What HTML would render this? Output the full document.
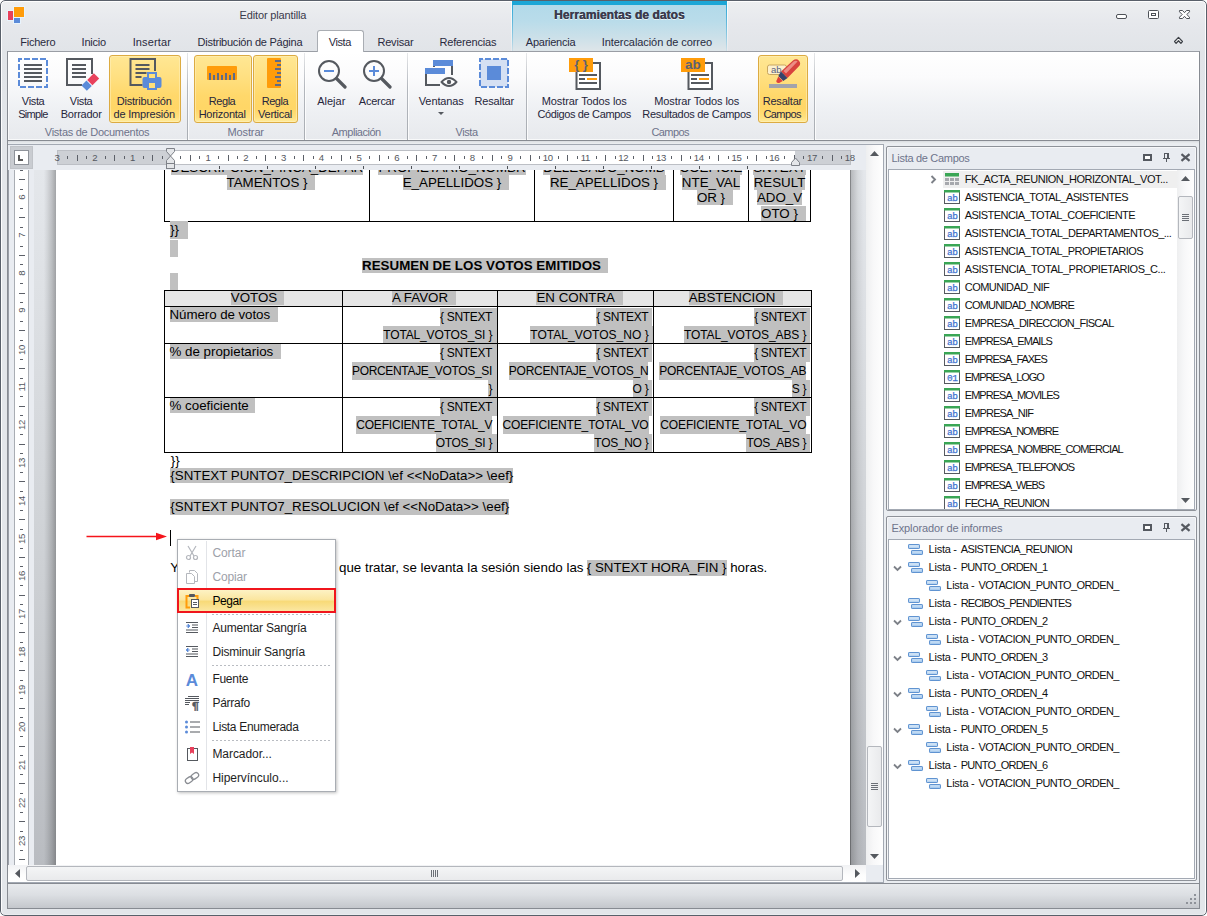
<!DOCTYPE html>
<html lang="es"><head><meta charset="utf-8"><title>Editor plantilla</title>
<style>
html,body{margin:0;padding:0;background:#fff}
body{width:1207px;height:916px;overflow:hidden;position:relative}
#win{position:absolute;left:0;top:0;width:1207px;height:916px;box-sizing:border-box;border-radius:5px;overflow:hidden;
 font-family:'Liberation Sans',sans-serif;font-size:11px;
 background:linear-gradient(to bottom,#edeff1 0,#e6e8ec 24px,#e1e4e8 52px,#e3e6ea 150px,#e3e6ea 100%)}
#win div,#win span,#win svg{position:absolute;display:block}
#win .t{white-space:pre}
#frame{left:0;top:0;width:1207px;height:916px;box-sizing:border-box;border:1px solid #59606a;border-radius:5px;pointer-events:none}
#glow{left:1px;top:1px;width:1205px;height:914px;box-sizing:border-box;border:1px solid rgba(255,255,255,.92);border-bottom-color:rgba(255,255,255,.25);border-radius:4px}

</style></head>
<body>
<div id="win">
<div id="glow"></div>
<div style="left:8px;top:11px;width:5px;height:9px;background:#e8415c;box-shadow:0 0 0 1px rgba(232,244,255,.85)"></div>
<div style="left:14px;top:7px;width:10px;height:10px;background:#ff9c0a;box-shadow:0 0 0 1px rgba(232,244,255,.85)"></div>
<div style="left:14px;top:18px;width:6px;height:5px;background:#5b8bd9;box-shadow:0 0 0 1px rgba(232,244,255,.85)"></div>
<span class="t" style="left:239.62px;top:8.49px;line-height:14px;height:14px;color:#3a3a4c;font-size:11px;letter-spacing:-0.156px;">Editor plantilla</span>
<div style="left:511px;top:1px;width:1px;height:50px;background:linear-gradient(to bottom,rgba(255,255,255,.9),rgba(255,255,255,.2))"></div>
<div style="left:727px;top:1px;width:1px;height:50px;background:linear-gradient(to bottom,rgba(255,255,255,.9),rgba(255,255,255,.2))"></div>
<div style="left:512px;top:1px;width:215px;height:50px;background:linear-gradient(to bottom,#b1d9e9 0,#b9dcea 20px,#cbe0e9 36px,#dde5e9 49px)"></div>
<div style="left:512px;top:1px;width:1px;height:50px;background:linear-gradient(to bottom,#22a5d7 0,#5fb7db 40%,rgba(170,210,228,.3) 100%)"></div>
<div style="left:726px;top:1px;width:1px;height:50px;background:linear-gradient(to bottom,#22a5d7 0,#5fb7db 40%,rgba(170,210,228,.3) 100%)"></div>
<div style="left:512px;top:1px;width:215px;height:4px;background:#1ca6d6"></div>
<span class="t" style="left:554.03px;top:7.94px;line-height:15px;height:15px;color:#3b3b4d;font-size:12px;font-weight:700;letter-spacing:0.058px;text-shadow:0.350px 0 0 #3b3b4d,0 1px 0 rgba(255,255,255,.7);">Herramientas de datos</span>
<svg style="left:1114px;top:8px" width="80" height="14" viewBox="0 0 80 14"><rect x="2.5" y="6.5" width="10" height="4" rx="1.5" fill="#fff" stroke="#4d5157"/><rect x="34.5" y="2.5" width="10" height="8" rx="1" fill="#fff" stroke="#4d5157"/><rect x="37.5" y="5.5" width="4" height="2" fill="#fff" stroke="#4d5157"/><path d="M65.500 2.500h3l2 2.200 2-2.200h3v1.300l-2.700 2.700 2.700 2.700v1.300h-3l-2-2.200-2 2.200h-3v-1.300l2.700-2.700-2.700-2.700z" fill="#fff" stroke="#4d5157"/></svg>
<svg style="left:1172px;top:35px" width="14" height="11" viewBox="0 0 14 11"><path d="M2.600 6.500L6.500 2.400L10.400 6.500L8.900 8.200L6.500 5.700L4.100 8.200z" fill="#fff" stroke="#3f4349" stroke-width="1.300" stroke-linejoin="round"/></svg>
<div style="left:7px;top:51px;width:1193px;height:858px;box-sizing:border-box;border:1px solid #878b92;background:#eaedf1"></div>
<div style="left:8px;top:141px;width:1191px;height:3px;background:linear-gradient(to bottom,#d9dce0,#e4e7ea 50%,#eceef1)"></div>
<div style="left:7px;top:51px;width:1193px;height:90px;box-sizing:border-box;border:1px solid #9a9ea5;border-bottom-color:#878b92;border-left-color:#878b92;border-right-color:#878b92;background:linear-gradient(to bottom,#ffffff 0,#fbfbfc 25px,#eff1f4 55px,#e7e9ed 88px);box-shadow:inset 0 0 0 1px rgba(255,255,255,.7)"></div>
<div style="left:317px;top:30px;width:47px;height:22px;box-sizing:border-box;border:1px solid #a9adb3;border-bottom:none;border-radius:3px 3px 0 0;background:#fff"></div>
<span class="t" style="left:20.30px;top:35.19px;line-height:14px;height:14px;color:#2a2a40;font-size:11px;letter-spacing:-0.241px;">Fichero</span>
<span class="t" style="left:81.60px;top:35.19px;line-height:14px;height:14px;color:#2a2a40;font-size:11px;letter-spacing:-0.215px;">Inicio</span>
<span class="t" style="left:132.70px;top:35.19px;line-height:14px;height:14px;color:#2a2a40;font-size:11px;letter-spacing:0.125px;">Insertar</span>
<span class="t" style="left:197.50px;top:35.19px;line-height:14px;height:14px;color:#2a2a40;font-size:11px;letter-spacing:-0.240px;">Distribución de Página</span>
<span class="t" style="left:328.70px;top:35.19px;line-height:14px;height:14px;color:#2a2a40;font-size:11px;letter-spacing:-0.393px;">Vista</span>
<span class="t" style="left:377.40px;top:35.19px;line-height:14px;height:14px;color:#2a2a40;font-size:11px;letter-spacing:-0.185px;">Revisar</span>
<span class="t" style="left:439.40px;top:35.19px;line-height:14px;height:14px;color:#2a2a40;font-size:11px;letter-spacing:-0.155px;">Referencias</span>
<span class="t" style="left:525.80px;top:35.19px;line-height:14px;height:14px;color:#2a2a40;font-size:11px;letter-spacing:-0.248px;">Apariencia</span>
<span class="t" style="left:601.80px;top:35.19px;line-height:14px;height:14px;color:#2a2a40;font-size:11px;letter-spacing:-0.074px;">Intercalación de correo</span>
<div style="left:187px;top:53px;width:1px;height:87px;background:linear-gradient(to bottom,rgba(176,180,186,.3),#b3b7bd 40%,#a9adb3)"></div>
<div style="left:188px;top:53px;width:1px;height:87px;background:rgba(255,255,255,.8)"></div>
<div style="left:304px;top:53px;width:1px;height:87px;background:linear-gradient(to bottom,rgba(176,180,186,.3),#b3b7bd 40%,#a9adb3)"></div>
<div style="left:305px;top:53px;width:1px;height:87px;background:rgba(255,255,255,.8)"></div>
<div style="left:407px;top:53px;width:1px;height:87px;background:linear-gradient(to bottom,rgba(176,180,186,.3),#b3b7bd 40%,#a9adb3)"></div>
<div style="left:408px;top:53px;width:1px;height:87px;background:rgba(255,255,255,.8)"></div>
<div style="left:526px;top:53px;width:1px;height:87px;background:linear-gradient(to bottom,rgba(176,180,186,.3),#b3b7bd 40%,#a9adb3)"></div>
<div style="left:527px;top:53px;width:1px;height:87px;background:rgba(255,255,255,.8)"></div>
<div style="left:814px;top:53px;width:1px;height:87px;background:linear-gradient(to bottom,rgba(176,180,186,.3),#b3b7bd 40%,#a9adb3)"></div>
<div style="left:815px;top:53px;width:1px;height:87px;background:rgba(255,255,255,.8)"></div>
<span class="t" style="left:44.82px;top:125.19px;line-height:14px;height:14px;color:#6e738b;font-size:11px;letter-spacing:-0.268px;">Vistas de Documentos</span>
<span class="t" style="left:227.58px;top:125.19px;line-height:14px;height:14px;color:#6e738b;font-size:11px;letter-spacing:-0.140px;">Mostrar</span>
<span class="t" style="left:331.76px;top:125.19px;line-height:14px;height:14px;color:#6e738b;font-size:11px;letter-spacing:-0.481px;">Ampliación</span>
<span class="t" style="left:455.45px;top:125.19px;line-height:14px;height:14px;color:#6e738b;font-size:11px;letter-spacing:-0.393px;">Vista</span>
<span class="t" style="left:651.50px;top:125.19px;line-height:14px;height:14px;color:#6e738b;font-size:11px;letter-spacing:-0.595px;">Campos</span>
<div style="left:109px;top:55px;width:72px;height:68px;box-sizing:border-box;border:1px solid #dcab42;border-radius:3px;background:linear-gradient(to bottom,#ffe794 0,#ffe082 30%,#ffd86b 60%,#ffd666 80%,#ffe07e 93%,#ffeb9c 100%);box-shadow:inset 0 0 0 1px rgba(255,240,190,.55)"></div>
<div style="left:194px;top:55px;width:58px;height:68px;box-sizing:border-box;border:1px solid #dcab42;border-radius:3px;background:linear-gradient(to bottom,#ffe794 0,#ffe082 30%,#ffd86b 60%,#ffd666 80%,#ffe07e 93%,#ffeb9c 100%);box-shadow:inset 0 0 0 1px rgba(255,240,190,.55)"></div>
<div style="left:253px;top:55px;width:45px;height:68px;box-sizing:border-box;border:1px solid #dcab42;border-radius:3px;background:linear-gradient(to bottom,#ffe794 0,#ffe082 30%,#ffd86b 60%,#ffd666 80%,#ffe07e 93%,#ffeb9c 100%);box-shadow:inset 0 0 0 1px rgba(255,240,190,.55)"></div>
<div style="left:758px;top:55px;width:50px;height:68px;box-sizing:border-box;border:1px solid #dcab42;border-radius:3px;background:linear-gradient(to bottom,#ffe794 0,#ffe082 30%,#ffd86b 60%,#ffd666 80%,#ffe07e 93%,#ffeb9c 100%);box-shadow:inset 0 0 0 1px rgba(255,240,190,.55)"></div>
<span class="t" style="left:21.87px;top:93.59px;line-height:14px;height:14px;color:#26263b;font-size:11px;letter-spacing:-0.353px;">Vista</span>
<span class="t" style="left:18.16px;top:106.79px;line-height:14px;height:14px;color:#26263b;font-size:11px;letter-spacing:-0.671px;">Simple</span>
<span class="t" style="left:69.87px;top:93.59px;line-height:14px;height:14px;color:#26263b;font-size:11px;letter-spacing:-0.353px;">Vista</span>
<span class="t" style="left:60.78px;top:106.79px;line-height:14px;height:14px;color:#26263b;font-size:11px;letter-spacing:-0.250px;">Borrador</span>
<span class="t" style="left:116.70px;top:93.59px;line-height:14px;height:14px;color:#26263b;font-size:11px;letter-spacing:-0.206px;">Distribución</span>
<span class="t" style="left:113.51px;top:106.79px;line-height:14px;height:14px;color:#26263b;font-size:11px;letter-spacing:-0.183px;">de Impresión</span>
<span class="t" style="left:208.87px;top:93.59px;line-height:14px;height:14px;color:#26263b;font-size:11px;letter-spacing:-0.470px;">Regla</span>
<span class="t" style="left:198.67px;top:106.79px;line-height:14px;height:14px;color:#26263b;font-size:11px;letter-spacing:-0.253px;">Horizontal</span>
<span class="t" style="left:261.76px;top:93.59px;line-height:14px;height:14px;color:#26263b;font-size:11px;letter-spacing:-0.470px;">Regla</span>
<span class="t" style="left:258.07px;top:106.79px;line-height:14px;height:14px;color:#26263b;font-size:11px;letter-spacing:-0.260px;">Vertical</span>
<span class="t" style="left:317.29px;top:93.59px;line-height:14px;height:14px;color:#26263b;font-size:11px;letter-spacing:-0.021px;">Alejar</span>
<span class="t" style="left:358.86px;top:93.59px;line-height:14px;height:14px;color:#26263b;font-size:11px;letter-spacing:-0.272px;">Acercar</span>
<span class="t" style="left:418.75px;top:93.59px;line-height:14px;height:14px;color:#26263b;font-size:11px;letter-spacing:-0.109px;">Ventanas</span>
<span class="t" style="left:474.60px;top:93.59px;line-height:14px;height:14px;color:#26263b;font-size:11px;letter-spacing:-0.196px;">Resaltar</span>
<span class="t" style="left:541.75px;top:93.59px;line-height:14px;height:14px;color:#26263b;font-size:11px;letter-spacing:-0.095px;">Mostrar Todos los</span>
<span class="t" style="left:537.42px;top:106.79px;line-height:14px;height:14px;color:#26263b;font-size:11px;letter-spacing:-0.369px;">Códigos de Campos</span>
<span class="t" style="left:654.25px;top:93.59px;line-height:14px;height:14px;color:#26263b;font-size:11px;letter-spacing:-0.095px;">Mostrar Todos los</span>
<span class="t" style="left:642.31px;top:106.79px;line-height:14px;height:14px;color:#26263b;font-size:11px;letter-spacing:-0.282px;">Resultados de Campos</span>
<span class="t" style="left:762.70px;top:93.59px;line-height:14px;height:14px;color:#26263b;font-size:11px;letter-spacing:-0.196px;">Resaltar</span>
<span class="t" style="left:763.42px;top:106.79px;line-height:14px;height:14px;color:#26263b;font-size:11px;letter-spacing:-0.561px;">Campos</span>
<svg style="left:438px;top:112px" width="6" height="3" viewBox="0 0 6 3"><path d="M0 0h6l-3 3z" fill="#55595f"/></svg>
<svg style="left:17px;top:57px" width="32" height="32" viewBox="0 0 32 32"><rect x="2" y="2" width="28" height="28" fill="none" stroke="#5b8bd9" stroke-width="2" stroke-dasharray="6 2" stroke-dashoffset="3"/><rect x="7" y="7" width="18" height="2" fill="#55595f"/><rect x="7" y="11" width="18" height="2" fill="#55595f"/><rect x="7" y="15" width="18" height="2" fill="#55595f"/><rect x="7" y="19" width="18" height="2" fill="#55595f"/><rect x="7" y="23" width="18" height="2" fill="#55595f"/></svg>
<svg style="left:65px;top:57px" width="36" height="36" viewBox="0 0 36 36"><path d="M27 17V2H2v26h15" fill="none" stroke="#55595f" stroke-width="2"/><rect x="7" y="7" width="14" height="2" fill="#55595f"/><rect x="7" y="11" width="14" height="2" fill="#55595f"/><rect x="7" y="15" width="14" height="2" fill="#55595f"/><rect x="7" y="19" width="14" height="2" fill="#55595f"/><g transform="rotate(-45 25 25)"><rect x="16.500" y="21.500" width="7" height="7.500" fill="#5b8bd9"/><rect x="24.500" y="21.500" width="9.500" height="7.500" fill="#e8415c"/></g></svg>
<svg style="left:128px;top:57px" width="34" height="34" viewBox="0 0 34 34"><path d="M27 14V2H2.500v26h12" fill="none" stroke="#55595f" stroke-width="2"/><rect x="7.500" y="7" width="14" height="2" fill="#55595f"/><rect x="7.500" y="11" width="14" height="2" fill="#55595f"/><rect x="7.500" y="15" width="11" height="2" fill="#55595f"/><rect x="7.500" y="19" width="6" height="2" fill="#55595f"/><path d="M19 15h10v5h2.500q2 0 2 2v7q0 2-2 2H29v2H19v-2h-2.500q-2 0-2-2v-7q0-2 2-2H19z" fill="#5b8bd9"/><rect x="21" y="17" width="6" height="4" fill="#ffe07a"/><rect x="21" y="26" width="6" height="5" fill="#ffe07a"/></svg>
<svg style="left:206px;top:57px" width="32" height="32" viewBox="0 0 32 32"><rect x="1" y="9" width="30" height="14" rx="1" fill="#ff9c0a"/><rect x="3" y="16" width="2" height="7" fill="#5d6b8a"/><rect x="7" y="18" width="2" height="5" fill="#5d6b8a"/><rect x="11" y="16" width="2" height="7" fill="#5d6b8a"/><rect x="15" y="18" width="2" height="5" fill="#5d6b8a"/><rect x="19" y="16" width="2" height="7" fill="#5d6b8a"/><rect x="23" y="18" width="2" height="5" fill="#5d6b8a"/><rect x="27" y="16" width="2" height="7" fill="#5d6b8a"/></svg>
<svg style="left:258px;top:57px" width="32" height="32" viewBox="0 0 32 32"><rect x="9" y="1" width="14" height="30" rx="1" fill="#ff9c0a"/><rect x="17" y="3" width="6" height="2" fill="#5d6b8a"/><rect x="19" y="7" width="4" height="2" fill="#5d6b8a"/><rect x="17" y="11" width="6" height="2" fill="#5d6b8a"/><rect x="19" y="15" width="4" height="2" fill="#5d6b8a"/><rect x="17" y="19" width="6" height="2" fill="#5d6b8a"/><rect x="19" y="23" width="4" height="2" fill="#5d6b8a"/><rect x="17" y="27" width="6" height="2" fill="#5d6b8a"/></svg>
<svg style="left:316px;top:57px" width="32" height="32" viewBox="0 0 32 32"><circle cx="13" cy="14" r="10" fill="none" stroke="#55595f" stroke-width="2"/><path d="M20.500 21.500L29 30" stroke="#55595f" stroke-width="3.200" stroke-linecap="round"/><rect x="8" y="13" width="10" height="2" fill="#5b8bd9"/></svg>
<svg style="left:361px;top:57px" width="32" height="32" viewBox="0 0 32 32"><circle cx="13" cy="14" r="10" fill="none" stroke="#55595f" stroke-width="2"/><path d="M20.500 21.500L29 30" stroke="#55595f" stroke-width="3.200" stroke-linecap="round"/><rect x="8" y="13" width="10" height="2" fill="#5b8bd9"/><rect x="12" y="9" width="2" height="10" fill="#5b8bd9"/></svg>
<svg style="left:424px;top:57px" width="34" height="32" viewBox="0 0 34 32"><path d="M10 10V4h18v14" fill="none" stroke="#55595f" stroke-width="2"/><rect x="9" y="3" width="20" height="6" fill="#5b8bd9"/><path d="M2 12v16h14" fill="none" stroke="#55595f" stroke-width="2"/><path d="M20 12v5" stroke="#55595f" stroke-width="2"/><rect x="1" y="11" width="20" height="6" fill="#5b8bd9"/><path d="M17.500 25q7.500-8 15 0q-7.500 8-15 0z" fill="#fff" stroke="#55595f" stroke-width="2" stroke-linejoin="round"/><circle cx="25" cy="25" r="2.200" fill="#55595f"/></svg>
<svg style="left:478px;top:57px" width="32" height="32" viewBox="0 0 32 32"><rect x="2" y="2" width="28" height="28" fill="#d5e0f3" stroke="#5b8bd9" stroke-width="2" stroke-dasharray="6 2" stroke-dashoffset="3"/><rect x="9" y="9" width="14" height="14" fill="#5b8bd9"/></svg>
<svg style="left:569px;top:57px" width="34" height="34" viewBox="0 0 34 34"><rect x="7.500" y="6" width="23.500" height="26" fill="#fff" stroke="#55595f" stroke-width="2"/><rect x="10" y="17" width="18" height="2" fill="#55595f"/><rect x="10" y="21" width="6" height="2" fill="#55595f"/><rect x="18" y="21" width="10" height="2" fill="#ff9c0a"/><rect x="10" y="25" width="18" height="2" fill="#55595f"/><rect x="0" y="1" width="24" height="14" fill="#ff9c0a"/><text x="12" y="12.300" text-anchor="middle" font-family="Liberation Sans,sans-serif" font-weight="700" font-size="13" fill="#5d6273">{ }</text></svg>
<svg style="left:681px;top:57px" width="34" height="34" viewBox="0 0 34 34"><rect x="7.500" y="6" width="23.500" height="26" fill="#fff" stroke="#55595f" stroke-width="2"/><rect x="10" y="17" width="18" height="2" fill="#55595f"/><rect x="10" y="21" width="6" height="2" fill="#55595f"/><rect x="18" y="21" width="10" height="2" fill="#ff9c0a"/><rect x="10" y="25" width="18" height="2" fill="#55595f"/><rect x="0" y="1" width="24" height="14" fill="#ff9c0a"/><text x="12" y="12.300" text-anchor="middle" font-family="Liberation Sans,sans-serif" font-weight="700" font-size="13.5" fill="#5d6273">ab</text></svg>
<svg style="left:766px;top:57px" width="36" height="32" viewBox="0 0 36 32"><rect x="1.500" y="8" width="19" height="9.500" rx="2" fill="#fdf1cc" stroke="#c8a660"/><text x="5" y="16" font-family="Liberation Sans,sans-serif" font-size="9.500" fill="#5a6180">ab</text><path d="M27 3.500q3.300-2.600 6 .2q2.500 3-.3 5.800L21.500 21l-6.500-6.500z" fill="#d8433e"/><path d="M27.600 4.600q2.200-1.500 4 0L20 16.500l-2.500-2.500z" fill="#f09a92" opacity=".85"/><path d="M15 14.500l6.500 6.500-4.200 3-5-5z" fill="#35426b"/><path d="M12.300 19.500l4.500 4.500-3.600 1.900q-1.600.6-2.600-.6q-.8-1.300.3-2.600z" fill="#e0413c"/><rect x="3" y="27" width="28" height="4" fill="#a2a3ab"/></svg>
<div style="left:8px;top:144px;width:876px;height:739px;box-sizing:border-box;border:1px solid #a3a9b3;border-left-color:#9a9fa8;background:#e9ecf1"></div>
<div style="left:34px;top:170px;width:22px;height:695px;background:linear-gradient(to right,rgba(0,0,0,0) 0,rgba(0,0,0,0) 45%,rgba(0,0,0,.07) 62%,rgba(0,0,0,.17) 82%,rgba(0,0,0,.29) 100%),linear-gradient(to bottom,#e4e7eb 0,#dcdfe3 22%,#cccfd3 60%,#b9bcc1 100%)"></div>
<div style="left:850px;top:170px;width:16px;height:695px;background:linear-gradient(to right,rgba(0,0,0,.42) 0,rgba(0,0,0,.42) 1px,rgba(0,0,0,.2) 1px,rgba(0,0,0,.06) 8px,rgba(0,0,0,0) 14px),linear-gradient(to bottom,#e4e7eb 0,#dcdfe3 22%,#cccfd3 60%,#b9bcc1 100%)"></div>
<div style="left:56px;top:170px;width:794px;height:695px;background:#fff"></div>
<span class="t" style="left:170.84px;top:160.00px;line-height:15px;height:15px;color:#000;font-size:13.333px;background:#c0c0c0;">DESCRIPCION_FINCA_DEPAR</span>
<span class="t" style="left:226.51px;top:175.00px;line-height:15px;height:15px;color:#000;font-size:13.333px;background:#c0c0c0;padding-right:8px;">TAMENTOS }</span>
<span class="t" style="left:378.44px;top:160.00px;line-height:15px;height:15px;color:#000;font-size:13.333px;background:#c0c0c0;">PROPIETARIO_NOMBR</span>
<span class="t" style="left:402.73px;top:175.00px;line-height:15px;height:15px;color:#000;font-size:13.333px;background:#c0c0c0;padding-right:8px;">E_APELLIDOS }</span>
<span class="t" style="left:543.27px;top:160.00px;line-height:15px;height:15px;color:#000;font-size:13.333px;background:#c0c0c0;">DELEGADO_NOMB</span>
<span class="t" style="left:549.91px;top:175.00px;line-height:15px;height:15px;color:#000;font-size:13.333px;background:#c0c0c0;padding-right:8px;">RE_APELLIDOS }</span>
<span class="t" style="left:679.52px;top:160.00px;line-height:15px;height:15px;color:#000;font-size:13.333px;background:#c0c0c0;">COEFICIE</span>
<span class="t" style="left:681.86px;top:175.00px;line-height:15px;height:15px;color:#000;font-size:13.333px;background:#c0c0c0;">NTE_VAL</span>
<span class="t" style="left:696.92px;top:190.00px;line-height:15px;height:15px;color:#000;font-size:13.333px;background:#c0c0c0;padding-right:8px;">OR }</span>
<span class="t" style="left:753.21px;top:160.00px;line-height:15px;height:15px;color:#000;font-size:13.333px;background:#c0c0c0;">SNTEXT</span>
<span class="t" style="left:753.70px;top:175.00px;line-height:15px;height:15px;color:#000;font-size:13.333px;background:#c0c0c0;">RESULT</span>
<span class="t" style="left:756.91px;top:190.00px;line-height:15px;height:15px;color:#000;font-size:13.333px;background:#c0c0c0;">ADO_V</span>
<span class="t" style="left:761.10px;top:205.50px;line-height:15px;height:15px;color:#000;font-size:13.333px;background:#c0c0c0;padding-right:8px;">OTO }</span>
<div style="left:164px;top:168px;width:1px;height:54px;background:#000"></div>
<div style="left:369px;top:168px;width:1px;height:54px;background:#000"></div>
<div style="left:534px;top:168px;width:1px;height:54px;background:#000"></div>
<div style="left:673px;top:168px;width:1px;height:54px;background:#000"></div>
<div style="left:748px;top:168px;width:1px;height:54px;background:#000"></div>
<div style="left:810px;top:168px;width:1px;height:54px;background:#000"></div>
<div style="left:164px;top:221px;width:647px;height:1px;background:#000"></div>
<span class="t" style="left:170.00px;top:221.33px;line-height:17.5px;height:17.5px;color:#000;font-size:13.333px;background:#c0c0c0;padding-right:9px;">}}</span>
<div style="left:170px;top:239.7px;width:8px;height:17.8px;background:#c0c0c0"></div>
<span class="t" style="left:362.00px;top:258.18px;line-height:15px;height:15px;color:#000;font-size:13.333px;font-weight:700;letter-spacing:0.027px;background:#c0c0c0;padding-right:7px;">RESUMEN DE LOS VOTOS EMITIDOS</span>
<div style="left:170px;top:273px;width:8px;height:17.5px;background:#c0c0c0"></div>
<div style="left:165px;top:291px;width:646px;height:15px;background:#e6e6e6"></div>
<span class="t" style="left:230.79px;top:291.28px;line-height:14px;height:14px;color:#000;font-size:13.333px;background:#c0c0c0;padding-right:7px;">VOTOS</span>
<span class="t" style="left:391.98px;top:291.28px;line-height:14px;height:14px;color:#000;font-size:13.333px;background:#c0c0c0;padding-right:8px;">A FAVOR</span>
<span class="t" style="left:536.45px;top:291.28px;line-height:14px;height:14px;color:#000;font-size:13.333px;background:#c0c0c0;padding-right:8px;">EN CONTRA</span>
<span class="t" style="left:688.67px;top:291.28px;line-height:14px;height:14px;color:#000;font-size:13.333px;background:#c0c0c0;padding-right:8px;">ABSTENCION</span>
<span class="t" style="left:169.50px;top:306.88px;line-height:15px;height:15px;color:#000;font-size:13.333px;letter-spacing:-0.067px;background:#c0c0c0;padding-right:7.5px;">Número de votos</span>
<span class="t" style="left:169.50px;top:344.18px;line-height:15px;height:15px;color:#000;font-size:13.333px;background:#c0c0c0;padding-right:7.5px;">% de propietarios</span>
<span class="t" style="left:169.50px;top:398.48px;line-height:15px;height:15px;color:#000;font-size:13.333px;background:#c0c0c0;padding-right:6.5px;">% coeficiente</span>
<span class="t" style="left:440.06px;top:307.84px;line-height:18px;height:18px;color:#000;font-size:12.0px;letter-spacing:-0.336px;background:#c0c0c0;padding-right:5px;">{ SNTEXT</span>
<span class="t" style="left:383.25px;top:326.04px;line-height:18px;height:18px;color:#000;font-size:12.0px;letter-spacing:-0.149px;background:#c0c0c0;padding-right:5px;">TOTAL_VOTOS_SI }</span>
<span class="t" style="left:440.06px;top:344.34px;line-height:18px;height:18px;color:#000;font-size:12.0px;letter-spacing:-0.336px;background:#c0c0c0;padding-right:5px;">{ SNTEXT</span>
<span class="t" style="left:351.98px;top:362.14px;line-height:18px;height:18px;color:#000;font-size:12.0px;letter-spacing:-0.325px;background:#c0c0c0;padding-right:5px;">PORCENTAJE_VOTOS_SI</span>
<span class="t" style="left:488.38px;top:379.84px;line-height:18px;height:18px;color:#000;font-size:12.0px;letter-spacing:-0.300px;background:#c0c0c0;padding-right:5px;">}</span>
<span class="t" style="left:440.06px;top:398.34px;line-height:18px;height:18px;color:#000;font-size:12.0px;letter-spacing:-0.336px;background:#c0c0c0;padding-right:5px;">{ SNTEXT</span>
<span class="t" style="left:356.21px;top:416.34px;line-height:18px;height:18px;color:#000;font-size:12.0px;letter-spacing:-0.189px;background:#c0c0c0;">COEFICIENTE_TOTAL_V</span>
<span class="t" style="left:435.66px;top:434.34px;line-height:18px;height:18px;color:#000;font-size:12.0px;letter-spacing:-0.300px;background:#c0c0c0;padding-right:5px;">OTOS_SI }</span>
<span class="t" style="left:596.36px;top:307.84px;line-height:18px;height:18px;color:#000;font-size:12.0px;letter-spacing:-0.336px;background:#c0c0c0;padding-right:4px;">{ SNTEXT</span>
<span class="t" style="left:530.32px;top:326.04px;line-height:18px;height:18px;color:#000;font-size:12.0px;letter-spacing:0.022px;background:#c0c0c0;padding-right:4px;">TOTAL_VOTOS_NO }</span>
<span class="t" style="left:596.36px;top:344.34px;line-height:18px;height:18px;color:#000;font-size:12.0px;letter-spacing:-0.336px;background:#c0c0c0;padding-right:4px;">{ SNTEXT</span>
<span class="t" style="left:508.78px;top:362.14px;line-height:18px;height:18px;color:#000;font-size:12.0px;letter-spacing:-0.216px;background:#c0c0c0;">PORCENTAJE_VOTOS_N</span>
<span class="t" style="left:632.61px;top:379.84px;line-height:18px;height:18px;color:#000;font-size:12.0px;letter-spacing:-0.300px;background:#c0c0c0;padding-right:4px;">O }</span>
<span class="t" style="left:596.36px;top:398.34px;line-height:18px;height:18px;color:#000;font-size:12.0px;letter-spacing:-0.336px;background:#c0c0c0;padding-right:4px;">{ SNTEXT</span>
<span class="t" style="left:502.55px;top:416.34px;line-height:18px;height:18px;color:#000;font-size:12.0px;letter-spacing:-0.146px;background:#c0c0c0;">COEFICIENTE_TOTAL_VO</span>
<span class="t" style="left:594.33px;top:434.34px;line-height:18px;height:18px;color:#000;font-size:12.0px;letter-spacing:-0.300px;background:#c0c0c0;padding-right:4px;">TOS_NO }</span>
<span class="t" style="left:754.16px;top:307.84px;line-height:18px;height:18px;color:#000;font-size:12.0px;letter-spacing:-0.336px;background:#c0c0c0;padding-right:4px;">{ SNTEXT</span>
<span class="t" style="left:683.91px;top:326.04px;line-height:18px;height:18px;color:#000;font-size:12.0px;letter-spacing:-0.092px;background:#c0c0c0;padding-right:4px;">TOTAL_VOTOS_ABS }</span>
<span class="t" style="left:754.16px;top:344.34px;line-height:18px;height:18px;color:#000;font-size:12.0px;letter-spacing:-0.336px;background:#c0c0c0;padding-right:4px;">{ SNTEXT</span>
<span class="t" style="left:659.20px;top:362.14px;line-height:18px;height:18px;color:#000;font-size:12.0px;letter-spacing:-0.202px;background:#c0c0c0;">PORCENTAJE_VOTOS_AB</span>
<span class="t" style="left:791.74px;top:379.84px;line-height:18px;height:18px;color:#000;font-size:12.0px;letter-spacing:-0.300px;background:#c0c0c0;padding-right:4px;">S }</span>
<span class="t" style="left:754.16px;top:398.34px;line-height:18px;height:18px;color:#000;font-size:12.0px;letter-spacing:-0.336px;background:#c0c0c0;padding-right:4px;">{ SNTEXT</span>
<span class="t" style="left:660.35px;top:416.34px;line-height:18px;height:18px;color:#000;font-size:12.0px;letter-spacing:-0.146px;background:#c0c0c0;">COEFICIENTE_TOTAL_VO</span>
<span class="t" style="left:746.42px;top:434.34px;line-height:18px;height:18px;color:#000;font-size:12.0px;letter-spacing:-0.300px;background:#c0c0c0;padding-right:4px;">TOS_ABS }</span>
<div style="left:164px;top:290px;width:1px;height:163px;background:#000"></div>
<div style="left:342px;top:290px;width:1px;height:163px;background:#000"></div>
<div style="left:497px;top:290px;width:1px;height:163px;background:#000"></div>
<div style="left:653px;top:290px;width:1px;height:163px;background:#000"></div>
<div style="left:811px;top:290px;width:1px;height:163px;background:#000"></div>
<div style="left:164px;top:290px;width:648px;height:1px;background:#000"></div>
<div style="left:164px;top:306px;width:648px;height:1px;background:#000"></div>
<div style="left:164px;top:343px;width:648px;height:1px;background:#000"></div>
<div style="left:164px;top:397px;width:648px;height:1px;background:#000"></div>
<div style="left:164px;top:452px;width:648px;height:1px;background:#000"></div>
<span class="t" style="left:170.80px;top:452.88px;line-height:15px;height:15px;color:#000;font-size:13.333px;">}}</span>
<span class="t" style="left:170.30px;top:467.93px;line-height:15.5px;height:15.5px;color:#000;font-size:13.333px;letter-spacing:-0.005px;background:#c0c0c0;">{SNTEXT PUNTO7_DESCRIPCION \ef &lt;&lt;NoData&gt;&gt; \eef}</span>
<span class="t" style="left:170.30px;top:499.03px;line-height:15.5px;height:15.5px;color:#000;font-size:13.333px;letter-spacing:0.004px;background:#c0c0c0;">{SNTEXT PUNTO7_RESOLUCION \ef &lt;&lt;NoData&gt;&gt; \eef}</span>
<div style="left:170px;top:530px;width:1px;height:16px;background:#000"></div>
<svg style="left:86px;top:531px" width="82" height="11" viewBox="0 0 82 11"><path d="M0.500 5.500H72" stroke="#f5141b" stroke-width="1.400"/><path d="M70 1.800L81 5.500L70 9.200z" fill="#f5141b"/></svg>
<span class="t" style="left:170.30px;top:560.18px;line-height:15px;height:15px;color:#000;font-size:13.333px;">Y no habiendo más asuntos que tratar, se levanta la sesión siendo las </span>
<span class="t" style="left:586.80px;top:559.68px;line-height:16px;height:16px;color:#000;font-size:13.333px;background:#c0c0c0;">{ SNTEXT HORA_FIN }</span>
<span class="t" style="left:726.50px;top:560.18px;line-height:15px;height:15px;color:#000;font-size:13.333px;"> horas.</span>
<div style="left:8px;top:145px;width:875px;height:25px;background:#e9ecf1"></div>
<div style="left:10px;top:146px;width:23px;height:23px;box-sizing:border-box;background:#c9ccd1;border:1px solid #c0c3c8"></div>
<div style="left:14px;top:150px;width:15px;height:15px;box-sizing:border-box;background:#fff;border:1px solid #8e9299"></div>
<div style="left:18px;top:155px;width:2px;height:6px;background:#5a5a5a"></div>
<div style="left:18px;top:159px;width:5px;height:2px;background:#5a5a5a"></div>
<div style="left:57px;top:150px;width:794px;height:15px;box-sizing:border-box;background:#fff;border:1px solid #bcbfc5"></div>
<div style="left:57px;top:150px;width:113px;height:15px;box-sizing:border-box;background:#cdd0d5;border:1px solid #bcbfc5;border-right:none"></div>
<div style="left:795px;top:150px;width:56px;height:15px;box-sizing:border-box;background:#cdd0d5;border:1px solid #bcbfc5;border-left:none"></div>
<span class="t" style="left:54.48px;top:151.67px;line-height:12px;height:12px;color:#545860;font-size:9.6px;">3</span>
<span class="t" style="left:92.23px;top:151.67px;line-height:12px;height:12px;color:#545860;font-size:9.6px;">2</span>
<span class="t" style="left:129.98px;top:151.67px;line-height:12px;height:12px;color:#545860;font-size:9.6px;">1</span>
<span class="t" style="left:205.48px;top:151.67px;line-height:12px;height:12px;color:#545860;font-size:9.6px;">1</span>
<span class="t" style="left:243.23px;top:151.67px;line-height:12px;height:12px;color:#545860;font-size:9.6px;">2</span>
<span class="t" style="left:280.98px;top:151.67px;line-height:12px;height:12px;color:#545860;font-size:9.6px;">3</span>
<span class="t" style="left:318.73px;top:151.67px;line-height:12px;height:12px;color:#545860;font-size:9.6px;">4</span>
<span class="t" style="left:356.48px;top:151.67px;line-height:12px;height:12px;color:#545860;font-size:9.6px;">5</span>
<span class="t" style="left:394.23px;top:151.67px;line-height:12px;height:12px;color:#545860;font-size:9.6px;">6</span>
<span class="t" style="left:431.98px;top:151.67px;line-height:12px;height:12px;color:#545860;font-size:9.6px;">7</span>
<span class="t" style="left:469.73px;top:151.67px;line-height:12px;height:12px;color:#545860;font-size:9.6px;">8</span>
<span class="t" style="left:507.48px;top:151.67px;line-height:12px;height:12px;color:#545860;font-size:9.6px;">9</span>
<span class="t" style="left:542.76px;top:151.67px;line-height:12px;height:12px;color:#545860;font-size:9.6px;letter-spacing:-0.400px;">10</span>
<span class="t" style="left:580.87px;top:151.67px;line-height:12px;height:12px;color:#545860;font-size:9.6px;letter-spacing:-0.400px;">11</span>
<span class="t" style="left:618.26px;top:151.67px;line-height:12px;height:12px;color:#545860;font-size:9.6px;letter-spacing:-0.400px;">12</span>
<span class="t" style="left:656.01px;top:151.67px;line-height:12px;height:12px;color:#545860;font-size:9.6px;letter-spacing:-0.400px;">13</span>
<span class="t" style="left:693.76px;top:151.67px;line-height:12px;height:12px;color:#545860;font-size:9.6px;letter-spacing:-0.400px;">14</span>
<span class="t" style="left:731.51px;top:151.67px;line-height:12px;height:12px;color:#545860;font-size:9.6px;letter-spacing:-0.400px;">15</span>
<span class="t" style="left:769.26px;top:151.67px;line-height:12px;height:12px;color:#545860;font-size:9.6px;letter-spacing:-0.400px;">16</span>
<span class="t" style="left:807.01px;top:151.67px;line-height:12px;height:12px;color:#545860;font-size:9.6px;letter-spacing:-0.400px;">17</span>
<span class="t" style="left:844.76px;top:151.67px;line-height:12px;height:12px;color:#545860;font-size:9.6px;letter-spacing:-0.400px;">18</span>
<svg style="left:57px;top:150px" width="794" height="19" viewBox="0 0 794 19"><rect x="10" y="6" width="1" height="3" fill="#5c6068"/><rect x="20" y="5" width="1" height="6" fill="#5c6068"/><rect x="29" y="6" width="1" height="3" fill="#5c6068"/><rect x="48" y="6" width="1" height="3" fill="#5c6068"/><rect x="57" y="5" width="1" height="6" fill="#5c6068"/><rect x="67" y="6" width="1" height="3" fill="#5c6068"/><rect x="86" y="6" width="1" height="3" fill="#5c6068"/><rect x="95" y="5" width="1" height="6" fill="#5c6068"/><rect x="105" y="6" width="1" height="3" fill="#5c6068"/><rect x="123" y="6" width="1" height="3" fill="#5c6068"/><rect x="133" y="5" width="1" height="6" fill="#5c6068"/><rect x="142" y="6" width="1" height="3" fill="#5c6068"/><rect x="161" y="6" width="1" height="3" fill="#5c6068"/><rect x="171" y="5" width="1" height="6" fill="#5c6068"/><rect x="180" y="6" width="1" height="3" fill="#5c6068"/><rect x="199" y="6" width="1" height="3" fill="#5c6068"/><rect x="208" y="5" width="1" height="6" fill="#5c6068"/><rect x="218" y="6" width="1" height="3" fill="#5c6068"/><rect x="237" y="6" width="1" height="3" fill="#5c6068"/><rect x="246" y="5" width="1" height="6" fill="#5c6068"/><rect x="256" y="6" width="1" height="3" fill="#5c6068"/><rect x="274" y="6" width="1" height="3" fill="#5c6068"/><rect x="284" y="5" width="1" height="6" fill="#5c6068"/><rect x="293" y="6" width="1" height="3" fill="#5c6068"/><rect x="312" y="6" width="1" height="3" fill="#5c6068"/><rect x="322" y="5" width="1" height="6" fill="#5c6068"/><rect x="331" y="6" width="1" height="3" fill="#5c6068"/><rect x="350" y="6" width="1" height="3" fill="#5c6068"/><rect x="359" y="5" width="1" height="6" fill="#5c6068"/><rect x="369" y="6" width="1" height="3" fill="#5c6068"/><rect x="388" y="6" width="1" height="3" fill="#5c6068"/><rect x="397" y="5" width="1" height="6" fill="#5c6068"/><rect x="407" y="6" width="1" height="3" fill="#5c6068"/><rect x="425" y="6" width="1" height="3" fill="#5c6068"/><rect x="435" y="5" width="1" height="6" fill="#5c6068"/><rect x="444" y="6" width="1" height="3" fill="#5c6068"/><rect x="463" y="6" width="1" height="3" fill="#5c6068"/><rect x="473" y="5" width="1" height="6" fill="#5c6068"/><rect x="482" y="6" width="1" height="3" fill="#5c6068"/><rect x="501" y="6" width="1" height="3" fill="#5c6068"/><rect x="510" y="5" width="1" height="6" fill="#5c6068"/><rect x="520" y="6" width="1" height="3" fill="#5c6068"/><rect x="539" y="6" width="1" height="3" fill="#5c6068"/><rect x="548" y="5" width="1" height="6" fill="#5c6068"/><rect x="558" y="6" width="1" height="3" fill="#5c6068"/><rect x="576" y="6" width="1" height="3" fill="#5c6068"/><rect x="586" y="5" width="1" height="6" fill="#5c6068"/><rect x="595" y="6" width="1" height="3" fill="#5c6068"/><rect x="614" y="6" width="1" height="3" fill="#5c6068"/><rect x="624" y="5" width="1" height="6" fill="#5c6068"/><rect x="633" y="6" width="1" height="3" fill="#5c6068"/><rect x="652" y="6" width="1" height="3" fill="#5c6068"/><rect x="661" y="5" width="1" height="6" fill="#5c6068"/><rect x="671" y="6" width="1" height="3" fill="#5c6068"/><rect x="690" y="6" width="1" height="3" fill="#5c6068"/><rect x="699" y="5" width="1" height="6" fill="#5c6068"/><rect x="709" y="6" width="1" height="3" fill="#5c6068"/><rect x="727" y="6" width="1" height="3" fill="#5c6068"/><rect x="737" y="5" width="1" height="6" fill="#5c6068"/><rect x="746" y="6" width="1" height="3" fill="#5c6068"/><rect x="765" y="6" width="1" height="3" fill="#5c6068"/><rect x="775" y="5" width="1" height="6" fill="#5c6068"/><rect x="784" y="6" width="1" height="3" fill="#5c6068"/><rect x="162" y="16" width="1" height="3" fill="#4d5157"/><rect x="210" y="16" width="1" height="3" fill="#4d5157"/><rect x="258" y="16" width="1" height="3" fill="#4d5157"/><rect x="306" y="16" width="1" height="3" fill="#4d5157"/><rect x="354" y="16" width="1" height="3" fill="#4d5157"/><rect x="402" y="16" width="1" height="3" fill="#4d5157"/><rect x="450" y="16" width="1" height="3" fill="#4d5157"/><rect x="498" y="16" width="1" height="3" fill="#4d5157"/><rect x="546" y="16" width="1" height="3" fill="#4d5157"/><rect x="594" y="16" width="1" height="3" fill="#4d5157"/><rect x="642" y="16" width="1" height="3" fill="#4d5157"/><rect x="690" y="16" width="1" height="3" fill="#4d5157"/></svg>
<svg style="left:165px;top:147px" width="12" height="24" viewBox="0 0 12 24"><path d="M1.500 1.500h8v3L5.500 9 1.500 4.500z" fill="#e4e6e9" stroke="#7d8188"/><path d="M1.500 16.500v-3L5.500 9l4 4.500v3z" fill="#e4e6e9" stroke="#7d8188"/><rect x="1.500" y="16.500" width="8" height="5" fill="#e4e6e9" stroke="#7d8188"/></svg>
<svg style="left:790px;top:155px" width="12" height="12" viewBox="0 0 12 12"><path d="M1.500 10.500v-3L5.500 3l4 4.500v3z" fill="#e4e6e9" stroke="#7d8188"/></svg>
<div style="left:14px;top:170px;width:15px;height:695px;box-sizing:border-box;background:#fff;border-left:1px solid #a9adb3;border-right:1px solid #a9adb3"></div>
<span class="t" style="left:11.500px;top:191.0px;width:20px;height:12px;line-height:12px;text-align:center;font-size:9.600px;color:#545860;transform:rotate(-90deg)">6</span>
<span class="t" style="left:11.500px;top:228.8px;width:20px;height:12px;line-height:12px;text-align:center;font-size:9.600px;color:#545860;transform:rotate(-90deg)">7</span>
<span class="t" style="left:11.500px;top:266.5px;width:20px;height:12px;line-height:12px;text-align:center;font-size:9.600px;color:#545860;transform:rotate(-90deg)">8</span>
<span class="t" style="left:11.500px;top:304.2px;width:20px;height:12px;line-height:12px;text-align:center;font-size:9.600px;color:#545860;transform:rotate(-90deg)">9</span>
<span class="t" style="left:11.500px;top:343.7px;width:20px;height:12px;line-height:12px;text-align:center;font-size:9.600px;letter-spacing:-0.4px;color:#545860;transform:rotate(-90deg)">10</span>
<span class="t" style="left:11.500px;top:381.4px;width:20px;height:12px;line-height:12px;text-align:center;font-size:9.600px;letter-spacing:-0.4px;color:#545860;transform:rotate(-90deg)">11</span>
<span class="t" style="left:11.500px;top:419.2px;width:20px;height:12px;line-height:12px;text-align:center;font-size:9.600px;letter-spacing:-0.4px;color:#545860;transform:rotate(-90deg)">12</span>
<span class="t" style="left:11.500px;top:456.9px;width:20px;height:12px;line-height:12px;text-align:center;font-size:9.600px;letter-spacing:-0.4px;color:#545860;transform:rotate(-90deg)">13</span>
<span class="t" style="left:11.500px;top:494.7px;width:20px;height:12px;line-height:12px;text-align:center;font-size:9.600px;letter-spacing:-0.4px;color:#545860;transform:rotate(-90deg)">14</span>
<span class="t" style="left:11.500px;top:532.5px;width:20px;height:12px;line-height:12px;text-align:center;font-size:9.600px;letter-spacing:-0.4px;color:#545860;transform:rotate(-90deg)">15</span>
<span class="t" style="left:11.500px;top:570.2px;width:20px;height:12px;line-height:12px;text-align:center;font-size:9.600px;letter-spacing:-0.4px;color:#545860;transform:rotate(-90deg)">16</span>
<span class="t" style="left:11.500px;top:608.0px;width:20px;height:12px;line-height:12px;text-align:center;font-size:9.600px;letter-spacing:-0.4px;color:#545860;transform:rotate(-90deg)">17</span>
<span class="t" style="left:11.500px;top:645.7px;width:20px;height:12px;line-height:12px;text-align:center;font-size:9.600px;letter-spacing:-0.4px;color:#545860;transform:rotate(-90deg)">18</span>
<span class="t" style="left:11.500px;top:683.5px;width:20px;height:12px;line-height:12px;text-align:center;font-size:9.600px;letter-spacing:-0.4px;color:#545860;transform:rotate(-90deg)">19</span>
<span class="t" style="left:11.500px;top:721.2px;width:20px;height:12px;line-height:12px;text-align:center;font-size:9.600px;letter-spacing:-0.4px;color:#545860;transform:rotate(-90deg)">20</span>
<span class="t" style="left:11.500px;top:759.0px;width:20px;height:12px;line-height:12px;text-align:center;font-size:9.600px;letter-spacing:-0.4px;color:#545860;transform:rotate(-90deg)">21</span>
<span class="t" style="left:11.500px;top:796.7px;width:20px;height:12px;line-height:12px;text-align:center;font-size:9.600px;letter-spacing:-0.4px;color:#545860;transform:rotate(-90deg)">22</span>
<span class="t" style="left:11.500px;top:834.5px;width:20px;height:12px;line-height:12px;text-align:center;font-size:9.600px;letter-spacing:-0.4px;color:#545860;transform:rotate(-90deg)">23</span>
<svg style="left:14px;top:170px" width="15" height="695" viewBox="0 0 15 695"><rect x="6" y="0" width="3" height="1" fill="#5c6068"/><rect x="5" y="9" width="6" height="1" fill="#5c6068"/><rect x="6" y="19" width="3" height="1" fill="#5c6068"/><rect x="6" y="38" width="3" height="1" fill="#5c6068"/><rect x="5" y="47" width="6" height="1" fill="#5c6068"/><rect x="6" y="57" width="3" height="1" fill="#5c6068"/><rect x="6" y="76" width="3" height="1" fill="#5c6068"/><rect x="5" y="85" width="6" height="1" fill="#5c6068"/><rect x="6" y="94" width="3" height="1" fill="#5c6068"/><rect x="6" y="113" width="3" height="1" fill="#5c6068"/><rect x="5" y="123" width="6" height="1" fill="#5c6068"/><rect x="6" y="132" width="3" height="1" fill="#5c6068"/><rect x="6" y="151" width="3" height="1" fill="#5c6068"/><rect x="5" y="160" width="6" height="1" fill="#5c6068"/><rect x="6" y="170" width="3" height="1" fill="#5c6068"/><rect x="6" y="189" width="3" height="1" fill="#5c6068"/><rect x="5" y="198" width="6" height="1" fill="#5c6068"/><rect x="6" y="208" width="3" height="1" fill="#5c6068"/><rect x="6" y="226" width="3" height="1" fill="#5c6068"/><rect x="5" y="236" width="6" height="1" fill="#5c6068"/><rect x="6" y="245" width="3" height="1" fill="#5c6068"/><rect x="6" y="264" width="3" height="1" fill="#5c6068"/><rect x="5" y="274" width="6" height="1" fill="#5c6068"/><rect x="6" y="283" width="3" height="1" fill="#5c6068"/><rect x="6" y="302" width="3" height="1" fill="#5c6068"/><rect x="5" y="311" width="6" height="1" fill="#5c6068"/><rect x="6" y="321" width="3" height="1" fill="#5c6068"/><rect x="6" y="340" width="3" height="1" fill="#5c6068"/><rect x="5" y="349" width="6" height="1" fill="#5c6068"/><rect x="6" y="359" width="3" height="1" fill="#5c6068"/><rect x="6" y="378" width="3" height="1" fill="#5c6068"/><rect x="5" y="387" width="6" height="1" fill="#5c6068"/><rect x="6" y="396" width="3" height="1" fill="#5c6068"/><rect x="6" y="415" width="3" height="1" fill="#5c6068"/><rect x="5" y="425" width="6" height="1" fill="#5c6068"/><rect x="6" y="434" width="3" height="1" fill="#5c6068"/><rect x="6" y="453" width="3" height="1" fill="#5c6068"/><rect x="5" y="462" width="6" height="1" fill="#5c6068"/><rect x="6" y="472" width="3" height="1" fill="#5c6068"/><rect x="6" y="491" width="3" height="1" fill="#5c6068"/><rect x="5" y="500" width="6" height="1" fill="#5c6068"/><rect x="6" y="510" width="3" height="1" fill="#5c6068"/><rect x="6" y="528" width="3" height="1" fill="#5c6068"/><rect x="5" y="538" width="6" height="1" fill="#5c6068"/><rect x="6" y="547" width="3" height="1" fill="#5c6068"/><rect x="6" y="566" width="3" height="1" fill="#5c6068"/><rect x="5" y="576" width="6" height="1" fill="#5c6068"/><rect x="6" y="585" width="3" height="1" fill="#5c6068"/><rect x="6" y="604" width="3" height="1" fill="#5c6068"/><rect x="5" y="613" width="6" height="1" fill="#5c6068"/><rect x="6" y="623" width="3" height="1" fill="#5c6068"/><rect x="6" y="642" width="3" height="1" fill="#5c6068"/><rect x="5" y="651" width="6" height="1" fill="#5c6068"/><rect x="6" y="661" width="3" height="1" fill="#5c6068"/><rect x="6" y="680" width="3" height="1" fill="#5c6068"/><rect x="5" y="689" width="6" height="1" fill="#5c6068"/></svg>
<div style="left:866px;top:145px;width:17px;height:720px;background:linear-gradient(to right,#eeeff0,#f8f8f9 45%,#fefefe)"></div>
<svg style="left:870px;top:151px" width="9" height="5" viewBox="0 0 9 5"><path d="M0 5L4.500 0L9 5z" fill="#55595f"/></svg>
<svg style="left:870px;top:854px" width="9" height="5" viewBox="0 0 9 5"><path d="M0 0h9L4.500 5z" fill="#55595f"/></svg>
<div style="left:867px;top:746px;width:15px;height:81px;box-sizing:border-box;border:1px solid #b4b7bd;border-radius:2px;background:linear-gradient(to right,#f4f5f6,#e9eaec)"></div>
<svg style="left:871px;top:783px" width="8" height="8" viewBox="0 0 8 8"><rect x="0" y="0" width="7" height="1" fill="#6b6f76"/><rect x="0" y="2" width="7" height="1" fill="#6b6f76"/><rect x="0" y="4" width="7" height="1" fill="#6b6f76"/><rect x="0" y="6" width="7" height="1" fill="#6b6f76"/></svg>
<div style="left:8px;top:865px;width:858px;height:17px;background:linear-gradient(to bottom,#f1f2f4,#fdfdfd 60%,#fff)"></div>
<svg style="left:15px;top:869px" width="5" height="9" viewBox="0 0 5 9"><path d="M5 0v9L0 4.500z" fill="#55595f"/></svg>
<svg style="left:855px;top:869px" width="5" height="9" viewBox="0 0 5 9"><path d="M0 0v9L5 4.500z" fill="#55595f"/></svg>
<div style="left:26px;top:866px;width:817px;height:15px;box-sizing:border-box;border:1px solid #b4b7bd;border-radius:2px;background:linear-gradient(to bottom,#f4f5f6,#e9eaec)"></div>
<svg style="left:431px;top:870px" width="8" height="8" viewBox="0 0 8 8"><rect x="0" y="0" width="1" height="7" fill="#6b6f76"/><rect x="2" y="0" width="1" height="7" fill="#6b6f76"/><rect x="4" y="0" width="1" height="7" fill="#6b6f76"/><rect x="6" y="0" width="1" height="7" fill="#6b6f76"/></svg>
<div style="left:866px;top:865px;width:17px;height:17px;background:#e9ecf1"></div>
<div style="left:177px;top:539px;width:159px;height:253px;box-sizing:border-box;border:1px solid #a9adb3;background:#fff;box-shadow:1px 1px 3px rgba(0,0,0,.25)"></div>
<div style="left:206px;top:541px;width:1px;height:249px;background:#e2e4e8"></div>
<div style="left:177px;top:588px;width:159px;height:25px;box-sizing:border-box;border:2px solid #f0151c;background:linear-gradient(to bottom,#fdf2c4 0,#fbe6a0 45%,#f8da78 55%,#fbe7a2 100%)"></div>
<div style="left:212px;top:614px;width:119px;height:1px;background:repeating-linear-gradient(to right,#b9bcc2 0,#b9bcc2 2px,transparent 2px,transparent 4px)"></div>
<div style="left:212px;top:665px;width:119px;height:1px;background:repeating-linear-gradient(to right,#b9bcc2 0,#b9bcc2 2px,transparent 2px,transparent 4px)"></div>
<div style="left:212px;top:740px;width:119px;height:1px;background:repeating-linear-gradient(to right,#b9bcc2 0,#b9bcc2 2px,transparent 2px,transparent 4px)"></div>
<span class="t" style="left:212.40px;top:545.14px;line-height:16px;height:16px;color:#9da1a9;font-size:12px;letter-spacing:-0.057px;">Cortar</span>
<span class="t" style="left:212.40px;top:569.14px;line-height:16px;height:16px;color:#9da1a9;font-size:12px;letter-spacing:-0.143px;">Copiar</span>
<span class="t" style="left:212.40px;top:592.64px;line-height:16px;height:16px;color:#000;font-size:12px;letter-spacing:-0.406px;">Pegar</span>
<span class="t" style="left:212.40px;top:620.14px;line-height:16px;height:16px;color:#1e1e1e;font-size:12px;letter-spacing:-0.199px;">Aumentar Sangría</span>
<span class="t" style="left:212.40px;top:644.14px;line-height:16px;height:16px;color:#1e1e1e;font-size:12px;letter-spacing:-0.169px;">Disminuir Sangría</span>
<span class="t" style="left:212.40px;top:671.14px;line-height:16px;height:16px;color:#1e1e1e;font-size:12px;letter-spacing:-0.260px;">Fuente</span>
<span class="t" style="left:212.40px;top:695.14px;line-height:16px;height:16px;color:#1e1e1e;font-size:12px;letter-spacing:-0.251px;">Párrafo</span>
<span class="t" style="left:212.40px;top:718.84px;line-height:16px;height:16px;color:#1e1e1e;font-size:12px;letter-spacing:-0.302px;">Lista Enumerada</span>
<span class="t" style="left:212.40px;top:746.14px;line-height:16px;height:16px;color:#1e1e1e;font-size:12px;letter-spacing:-0.048px;">Marcador...</span>
<span class="t" style="left:212.40px;top:770.14px;line-height:16px;height:16px;color:#1e1e1e;font-size:12px;letter-spacing:-0.040px;">Hipervínculo...</span>
<svg style="left:184px;top:545px" width="16" height="16" viewBox="0 0 16 16"><path d="M4 1l6 10M12 1L6 11" stroke="#b4b7bd" stroke-width="1.200" fill="none"/><circle cx="4.500" cy="12.500" r="2" fill="none" stroke="#b4b7bd" stroke-width="1.200"/><circle cx="11.500" cy="12.500" r="2" fill="none" stroke="#b4b7bd" stroke-width="1.200"/></svg>
<svg style="left:184px;top:569px" width="16" height="16" viewBox="0 0 16 16"><path d="M5.500 3.500v-2h5l3 3v8h-3" fill="none" stroke="#b4b7bd"/><path d="M2.500 4.500h5l3 3v7h-8z" fill="#fff" stroke="#b4b7bd"/></svg>
<svg style="left:184px;top:592.5px" width="16" height="16" viewBox="0 0 16 16"><path d="M6 3H2.500v11.500H6" fill="none" stroke="#ff9c0a" stroke-width="2"/><rect x="5" y="1" width="6" height="3" rx="1" fill="#55595f"/><path d="M11 3h2.500v3" fill="none" stroke="#ff9c0a" stroke-width="2"/><rect x="7.500" y="6.500" width="7" height="8" fill="#fff" stroke="#55595f"/><rect x="9" y="9" width="4" height="1" fill="#55595f"/><rect x="9" y="11" width="4" height="1" fill="#55595f"/></svg>
<svg style="left:184px;top:620px" width="16" height="16" viewBox="0 0 16 16"><rect x="2" y="2" width="12" height="1" fill="#55595f"/><rect x="2" y="9.5" width="12" height="1" fill="#55595f"/><rect x="2" y="12" width="12" height="1" fill="#55595f"/><rect x="8" y="4.5" width="6" height="1" fill="#55595f"/><rect x="8" y="7" width="6" height="1" fill="#55595f"/><path d="M2 6h3M4 4l2 2-2 2z" stroke="#5b8bd9" fill="#5b8bd9" stroke-width=".8"/></svg>
<svg style="left:184px;top:644px" width="16" height="16" viewBox="0 0 16 16"><rect x="2" y="2" width="12" height="1" fill="#55595f"/><rect x="2" y="9.5" width="12" height="1" fill="#55595f"/><rect x="2" y="12" width="12" height="1" fill="#55595f"/><rect x="8" y="4.5" width="6" height="1" fill="#55595f"/><rect x="8" y="7" width="6" height="1" fill="#55595f"/><path d="M3 6h3M4 4l-2 2 2 2z" stroke="#5b8bd9" fill="#5b8bd9" stroke-width=".8"/></svg>
<svg style="left:184px;top:671px" width="16" height="16" viewBox="0 0 16 16"><text x="8" y="14.500" text-anchor="middle" font-family="Liberation Sans,sans-serif" font-weight="700" font-size="17" fill="#5b8bd9">A</text></svg>
<svg style="left:184px;top:695px" width="16" height="16" viewBox="0 0 16 16"><rect x="4" y="1" width="11" height="1" fill="#55595f"/><rect x="1" y="3" width="14" height="1" fill="#55595f"/><rect x="1" y="5" width="14" height="1" fill="#55595f"/><rect x="1" y="7" width="5" height="1" fill="#55595f"/><rect x="1" y="9" width="4" height="1" fill="#55595f"/><text x="11.500" y="16" text-anchor="middle" font-family="Liberation Sans,sans-serif" font-weight="700" font-size="12.500" fill="#55595f" stroke="#55595f" stroke-width=".4">¶</text></svg>
<svg style="left:184px;top:718.7px" width="16" height="16" viewBox="0 0 16 16"><circle cx="2.500" cy="3" r="1.500" fill="#5b8bd9"/><rect x="6" y="2.5" width="10" height="1" fill="#55595f"/><circle cx="2.500" cy="8" r="1.500" fill="#5b8bd9"/><rect x="6" y="7.5" width="10" height="1" fill="#55595f"/><circle cx="2.500" cy="13" r="1.500" fill="#5b8bd9"/><rect x="6" y="12.5" width="10" height="1" fill="#55595f"/></svg>
<svg style="left:184px;top:746px" width="16" height="16" viewBox="0 0 16 16"><rect x="3.500" y="2.500" width="10" height="12" fill="#fff" stroke="#55595f"/><path d="M6 1h4v7l-2-1.500L6 8z" fill="#e8415c"/></svg>
<svg style="left:184px;top:770px" width="16" height="16" viewBox="0 0 16 16"><g transform="rotate(-35 8 8)" fill="none" stroke="#8a8d93" stroke-width="1.300"><rect x="0.500" y="5.500" width="8" height="5" rx="2.500"/><rect x="7.500" y="5.500" width="8" height="5" rx="2.500"/></g></svg>
<div style="left:886px;top:146px;width:311px;height:365px;box-sizing:border-box;border:1px solid #8e9299;border-radius:2px;background:#e9ecf1;box-shadow:inset 0 0 0 1px rgba(255,255,255,.6)"></div>
<span class="t" style="left:891.50px;top:150.69px;line-height:14px;height:14px;color:#6e748c;font-size:11px;letter-spacing:-0.303px;">Lista de Campos</span>
<svg style="left:1143px;top:153px" width="50" height="10" viewBox="0 0 50 10"><rect x="0" y="1" width="9" height="7" fill="#555960"/><rect x="2" y="3" width="5" height="3" fill="#fff"/><rect x="21" y="0" width="5" height="1" fill="#555960"/><rect x="21" y="0" width="1" height="5" fill="#555960"/><rect x="24" y="0" width="2" height="5" fill="#555960"/><rect x="20" y="5" width="7" height="1" fill="#555960"/><rect x="23" y="6" width="1" height="3" fill="#555960"/><path d="M39.300 1.800l6.400 5.400M45.700 1.800l-6.400 5.400" stroke="#555960" stroke-width="2.200" stroke-linecap="square"/></svg>
<div style="left:888px;top:169px;width:307px;height:341px;box-sizing:border-box;border:1px solid #a3a9b3;background:#fff"></div>
<div style="left:943px;top:171px;width:234px;height:17px;background:#efefef"></div>
<svg style="left:930px;top:175px" width="7" height="9" viewBox="0 0 7 9"><path d="M1.500 1L5 4.500L1.500 8" fill="none" stroke="#7d8188" stroke-width="1.900"/></svg>
<svg style="left:945px;top:173px" width="14" height="12" viewBox="0 0 14 12"><rect x="0" y="0" width="14" height="3.500" fill="#3aa655"/><rect x="0" y="5" width="4" height="3" fill="#a6a8ad"/><rect x="0" y="9" width="4" height="3" fill="#a6a8ad"/><rect x="5" y="5" width="4" height="3" fill="#a6a8ad"/><rect x="5" y="9" width="4" height="3" fill="#a6a8ad"/><rect x="10" y="5" width="4" height="3" fill="#a6a8ad"/><rect x="10" y="9" width="4" height="3" fill="#a6a8ad"/></svg>
<div style="left:889px;top:170px;width:288px;height:339px;overflow:hidden">
<span class="t" style="left:75.80px;top:2.49px;line-height:14px;height:14px;color:#111;font-size:11px;letter-spacing:-0.467px;">FK_ACTA_REUNION_HORIZONTAL_VOT...</span>
<svg style="left:55px;top:20px" width="16" height="14" viewBox="0 0 16 14"><rect x="0.500" y="1.500" width="15" height="12" fill="#fff" stroke="#55595f"/><rect x="0" y="0" width="16" height="2.500" fill="#3aa655"/><text x="8.200" y="11" text-anchor="middle" font-family="Liberation Mono,monospace" font-size="9.500" letter-spacing="-0.4" fill="#3f74cf" stroke="#3f74cf" stroke-width=".25">ab</text></svg>
<span class="t" style="left:75.80px;top:20.49px;line-height:14px;height:14px;color:#111;font-size:11px;letter-spacing:-0.642px;">ASISTENCIA_TOTAL_ASISTENTES</span>
<svg style="left:55px;top:38px" width="16" height="14" viewBox="0 0 16 14"><rect x="0.500" y="1.500" width="15" height="12" fill="#fff" stroke="#55595f"/><rect x="0" y="0" width="16" height="2.500" fill="#3aa655"/><text x="8.200" y="11" text-anchor="middle" font-family="Liberation Mono,monospace" font-size="9.500" letter-spacing="-0.4" fill="#3f74cf" stroke="#3f74cf" stroke-width=".25">ab</text></svg>
<span class="t" style="left:75.80px;top:38.49px;line-height:14px;height:14px;color:#111;font-size:11px;letter-spacing:-0.565px;">ASISTENCIA_TOTAL_COEFICIENTE</span>
<svg style="left:55px;top:56px" width="16" height="14" viewBox="0 0 16 14"><rect x="0.500" y="1.500" width="15" height="12" fill="#fff" stroke="#55595f"/><rect x="0" y="0" width="16" height="2.500" fill="#3aa655"/><text x="8.200" y="11" text-anchor="middle" font-family="Liberation Mono,monospace" font-size="9.500" letter-spacing="-0.4" fill="#3f74cf" stroke="#3f74cf" stroke-width=".25">ab</text></svg>
<span class="t" style="left:75.80px;top:56.49px;line-height:14px;height:14px;color:#111;font-size:11px;letter-spacing:-0.522px;">ASISTENCIA_TOTAL_DEPARTAMENTOS_...</span>
<svg style="left:55px;top:74px" width="16" height="14" viewBox="0 0 16 14"><rect x="0.500" y="1.500" width="15" height="12" fill="#fff" stroke="#55595f"/><rect x="0" y="0" width="16" height="2.500" fill="#3aa655"/><text x="8.200" y="11" text-anchor="middle" font-family="Liberation Mono,monospace" font-size="9.500" letter-spacing="-0.4" fill="#3f74cf" stroke="#3f74cf" stroke-width=".25">ab</text></svg>
<span class="t" style="left:75.80px;top:74.49px;line-height:14px;height:14px;color:#111;font-size:11px;letter-spacing:-0.537px;">ASISTENCIA_TOTAL_PROPIETARIOS</span>
<svg style="left:55px;top:92px" width="16" height="14" viewBox="0 0 16 14"><rect x="0.500" y="1.500" width="15" height="12" fill="#fff" stroke="#55595f"/><rect x="0" y="0" width="16" height="2.500" fill="#3aa655"/><text x="8.200" y="11" text-anchor="middle" font-family="Liberation Mono,monospace" font-size="9.500" letter-spacing="-0.4" fill="#3f74cf" stroke="#3f74cf" stroke-width=".25">ab</text></svg>
<span class="t" style="left:75.80px;top:92.49px;line-height:14px;height:14px;color:#111;font-size:11px;letter-spacing:-0.486px;">ASISTENCIA_TOTAL_PROPIETARIOS_C...</span>
<svg style="left:55px;top:110px" width="16" height="14" viewBox="0 0 16 14"><rect x="0.500" y="1.500" width="15" height="12" fill="#fff" stroke="#55595f"/><rect x="0" y="0" width="16" height="2.500" fill="#3aa655"/><text x="8.200" y="11" text-anchor="middle" font-family="Liberation Mono,monospace" font-size="9.500" letter-spacing="-0.4" fill="#3f74cf" stroke="#3f74cf" stroke-width=".25">ab</text></svg>
<span class="t" style="left:75.80px;top:110.49px;line-height:14px;height:14px;color:#111;font-size:11px;letter-spacing:-0.559px;">COMUNIDAD_NIF</span>
<svg style="left:55px;top:128px" width="16" height="14" viewBox="0 0 16 14"><rect x="0.500" y="1.500" width="15" height="12" fill="#fff" stroke="#55595f"/><rect x="0" y="0" width="16" height="2.500" fill="#3aa655"/><text x="8.200" y="11" text-anchor="middle" font-family="Liberation Mono,monospace" font-size="9.500" letter-spacing="-0.4" fill="#3f74cf" stroke="#3f74cf" stroke-width=".25">ab</text></svg>
<span class="t" style="left:75.80px;top:128.49px;line-height:14px;height:14px;color:#111;font-size:11px;letter-spacing:-0.815px;">COMUNIDAD_NOMBRE</span>
<svg style="left:55px;top:146px" width="16" height="14" viewBox="0 0 16 14"><rect x="0.500" y="1.500" width="15" height="12" fill="#fff" stroke="#55595f"/><rect x="0" y="0" width="16" height="2.500" fill="#3aa655"/><text x="8.200" y="11" text-anchor="middle" font-family="Liberation Mono,monospace" font-size="9.500" letter-spacing="-0.4" fill="#3f74cf" stroke="#3f74cf" stroke-width=".25">ab</text></svg>
<span class="t" style="left:75.80px;top:146.49px;line-height:14px;height:14px;color:#111;font-size:11px;letter-spacing:-0.728px;">EMPRESA_DIRECCION_FISCAL</span>
<svg style="left:55px;top:164px" width="16" height="14" viewBox="0 0 16 14"><rect x="0.500" y="1.500" width="15" height="12" fill="#fff" stroke="#55595f"/><rect x="0" y="0" width="16" height="2.500" fill="#3aa655"/><text x="8.200" y="11" text-anchor="middle" font-family="Liberation Mono,monospace" font-size="9.500" letter-spacing="-0.4" fill="#3f74cf" stroke="#3f74cf" stroke-width=".25">ab</text></svg>
<span class="t" style="left:75.80px;top:164.49px;line-height:14px;height:14px;color:#111;font-size:11px;letter-spacing:-0.933px;">EMPRESA_EMAILS</span>
<svg style="left:55px;top:182px" width="16" height="14" viewBox="0 0 16 14"><rect x="0.500" y="1.500" width="15" height="12" fill="#fff" stroke="#55595f"/><rect x="0" y="0" width="16" height="2.500" fill="#3aa655"/><text x="8.200" y="11" text-anchor="middle" font-family="Liberation Mono,monospace" font-size="9.500" letter-spacing="-0.4" fill="#3f74cf" stroke="#3f74cf" stroke-width=".25">ab</text></svg>
<span class="t" style="left:75.80px;top:182.49px;line-height:14px;height:14px;color:#111;font-size:11px;letter-spacing:-1.037px;">EMPRESA_FAXES</span>
<svg style="left:55px;top:200px" width="16" height="14" viewBox="0 0 16 14"><rect x="0.500" y="1.500" width="15" height="12" fill="#fff" stroke="#55595f"/><rect x="0" y="0" width="16" height="2.500" fill="#3aa655"/><text x="8.200" y="11" text-anchor="middle" font-family="Liberation Mono,monospace" font-size="9.500" letter-spacing="-0.4" fill="#3f74cf" stroke="#3f74cf" stroke-width=".25">01</text></svg>
<span class="t" style="left:75.80px;top:200.49px;line-height:14px;height:14px;color:#111;font-size:11px;letter-spacing:-1.067px;">EMPRESA_LOGO</span>
<svg style="left:55px;top:218px" width="16" height="14" viewBox="0 0 16 14"><rect x="0.500" y="1.500" width="15" height="12" fill="#fff" stroke="#55595f"/><rect x="0" y="0" width="16" height="2.500" fill="#3aa655"/><text x="8.200" y="11" text-anchor="middle" font-family="Liberation Mono,monospace" font-size="9.500" letter-spacing="-0.4" fill="#3f74cf" stroke="#3f74cf" stroke-width=".25">ab</text></svg>
<span class="t" style="left:75.80px;top:218.49px;line-height:14px;height:14px;color:#111;font-size:11px;letter-spacing:-0.975px;">EMPRESA_MOVILES</span>
<svg style="left:55px;top:236px" width="16" height="14" viewBox="0 0 16 14"><rect x="0.500" y="1.500" width="15" height="12" fill="#fff" stroke="#55595f"/><rect x="0" y="0" width="16" height="2.500" fill="#3aa655"/><text x="8.200" y="11" text-anchor="middle" font-family="Liberation Mono,monospace" font-size="9.500" letter-spacing="-0.4" fill="#3f74cf" stroke="#3f74cf" stroke-width=".25">ab</text></svg>
<span class="t" style="left:75.80px;top:236.49px;line-height:14px;height:14px;color:#111;font-size:11px;letter-spacing:-0.858px;">EMPRESA_NIF</span>
<svg style="left:55px;top:254px" width="16" height="14" viewBox="0 0 16 14"><rect x="0.500" y="1.500" width="15" height="12" fill="#fff" stroke="#55595f"/><rect x="0" y="0" width="16" height="2.500" fill="#3aa655"/><text x="8.200" y="11" text-anchor="middle" font-family="Liberation Mono,monospace" font-size="9.500" letter-spacing="-0.4" fill="#3f74cf" stroke="#3f74cf" stroke-width=".25">ab</text></svg>
<span class="t" style="left:75.80px;top:254.49px;line-height:14px;height:14px;color:#111;font-size:11px;letter-spacing:-1.072px;">EMPRESA_NOMBRE</span>
<svg style="left:55px;top:272px" width="16" height="14" viewBox="0 0 16 14"><rect x="0.500" y="1.500" width="15" height="12" fill="#fff" stroke="#55595f"/><rect x="0" y="0" width="16" height="2.500" fill="#3aa655"/><text x="8.200" y="11" text-anchor="middle" font-family="Liberation Mono,monospace" font-size="9.500" letter-spacing="-0.4" fill="#3f74cf" stroke="#3f74cf" stroke-width=".25">ab</text></svg>
<span class="t" style="left:75.80px;top:272.49px;line-height:14px;height:14px;color:#111;font-size:11px;letter-spacing:-0.905px;">EMPRESA_NOMBRE_COMERCIAL</span>
<svg style="left:55px;top:290px" width="16" height="14" viewBox="0 0 16 14"><rect x="0.500" y="1.500" width="15" height="12" fill="#fff" stroke="#55595f"/><rect x="0" y="0" width="16" height="2.500" fill="#3aa655"/><text x="8.200" y="11" text-anchor="middle" font-family="Liberation Mono,monospace" font-size="9.500" letter-spacing="-0.4" fill="#3f74cf" stroke="#3f74cf" stroke-width=".25">ab</text></svg>
<span class="t" style="left:75.80px;top:290.49px;line-height:14px;height:14px;color:#111;font-size:11px;letter-spacing:-1.020px;">EMPRESA_TELEFONOS</span>
<svg style="left:55px;top:308px" width="16" height="14" viewBox="0 0 16 14"><rect x="0.500" y="1.500" width="15" height="12" fill="#fff" stroke="#55595f"/><rect x="0" y="0" width="16" height="2.500" fill="#3aa655"/><text x="8.200" y="11" text-anchor="middle" font-family="Liberation Mono,monospace" font-size="9.500" letter-spacing="-0.4" fill="#3f74cf" stroke="#3f74cf" stroke-width=".25">ab</text></svg>
<span class="t" style="left:75.80px;top:308.49px;line-height:14px;height:14px;color:#111;font-size:11px;letter-spacing:-1.093px;">EMPRESA_WEBS</span>
<svg style="left:55px;top:326px" width="16" height="14" viewBox="0 0 16 14"><rect x="0.500" y="1.500" width="15" height="12" fill="#fff" stroke="#55595f"/><rect x="0" y="0" width="16" height="2.500" fill="#3aa655"/><text x="8.200" y="11" text-anchor="middle" font-family="Liberation Mono,monospace" font-size="9.500" letter-spacing="-0.4" fill="#3f74cf" stroke="#3f74cf" stroke-width=".25">ab</text></svg>
<span class="t" style="left:75.80px;top:326.49px;line-height:14px;height:14px;color:#111;font-size:11px;letter-spacing:-0.763px;">FECHA_REUNION</span>
</div>
<div style="left:1177px;top:170px;width:17px;height:339px;background:linear-gradient(to right,#eeeff0,#f8f8f9 45%,#fefefe)"></div>
<svg style="left:1181px;top:176px" width="9" height="5" viewBox="0 0 9 5"><path d="M0 5L4.500 0L9 5z" fill="#55595f"/></svg>
<svg style="left:1181px;top:498px" width="9" height="5" viewBox="0 0 9 5"><path d="M0 0h9L4.500 5z" fill="#55595f"/></svg>
<div style="left:1178px;top:196px;width:15px;height:43px;box-sizing:border-box;border:1px solid #b4b7bd;border-radius:2px;background:linear-gradient(to right,#f4f5f6,#e9eaec)"></div>
<svg style="left:1182px;top:214px" width="8" height="8" viewBox="0 0 8 8"><rect x="0" y="0" width="7" height="1" fill="#6b6f76"/><rect x="0" y="2" width="7" height="1" fill="#6b6f76"/><rect x="0" y="4" width="7" height="1" fill="#6b6f76"/><rect x="0" y="6" width="7" height="1" fill="#6b6f76"/></svg>
<div style="left:886px;top:516px;width:311px;height:365px;box-sizing:border-box;border:1px solid #8e9299;border-radius:2px;background:#e9ecf1;box-shadow:inset 0 0 0 1px rgba(255,255,255,.6)"></div>
<span class="t" style="left:891.50px;top:520.69px;line-height:14px;height:14px;color:#6e748c;font-size:11px;letter-spacing:-0.124px;">Explorador de informes</span>
<svg style="left:1143px;top:523px" width="50" height="10" viewBox="0 0 50 10"><rect x="0" y="1" width="9" height="7" fill="#555960"/><rect x="2" y="3" width="5" height="3" fill="#fff"/><rect x="21" y="0" width="5" height="1" fill="#555960"/><rect x="21" y="0" width="1" height="5" fill="#555960"/><rect x="24" y="0" width="2" height="5" fill="#555960"/><rect x="20" y="5" width="7" height="1" fill="#555960"/><rect x="23" y="6" width="1" height="3" fill="#555960"/><path d="M39.300 1.800l6.400 5.400M45.700 1.800l-6.400 5.400" stroke="#555960" stroke-width="2.200" stroke-linecap="square"/></svg>
<div style="left:888px;top:539px;width:307px;height:340px;box-sizing:border-box;border:1px solid #a3a9b3;background:#fff"></div>
<svg style="left:908px;top:542px" width="16" height="14" viewBox="0 0 16 14"><rect x="0.500" y="2.500" width="11" height="4" rx=".6" fill="#b9d5f1" stroke="#5f93d1"/><rect x="1.500" y="3.500" width="9" height="1" fill="#e1eefa"/><rect x="3.500" y="8.500" width="11" height="4" rx=".6" fill="#a9cbee" stroke="#5f93d1"/><rect x="4.500" y="9.500" width="9" height="1" fill="#d6e7f8"/></svg>
<span class="t" style="left:928.60px;top:542.09px;line-height:14px;height:14px;color:#111;font-size:11px;letter-spacing:-0.252px;">Lista - </span>
<span class="t" style="left:960.70px;top:542.09px;line-height:14px;height:14px;color:#111;font-size:11px;letter-spacing:-0.608px;">ASISTENCIA_REUNION</span>
<svg style="left:893px;top:565px" width="9" height="7" viewBox="0 0 9 7"><path d="M1 1.500L4.500 5L8 1.500" fill="none" stroke="#7d8188" stroke-width="1.800"/></svg>
<svg style="left:908px;top:560px" width="16" height="14" viewBox="0 0 16 14"><rect x="0.500" y="2.500" width="11" height="4" rx=".6" fill="#b9d5f1" stroke="#5f93d1"/><rect x="1.500" y="3.500" width="9" height="1" fill="#e1eefa"/><rect x="3.500" y="8.500" width="11" height="4" rx=".6" fill="#a9cbee" stroke="#5f93d1"/><rect x="4.500" y="9.500" width="9" height="1" fill="#d6e7f8"/></svg>
<span class="t" style="left:928.60px;top:560.09px;line-height:14px;height:14px;color:#111;font-size:11px;letter-spacing:-0.252px;">Lista - </span>
<span class="t" style="left:960.70px;top:560.09px;line-height:14px;height:14px;color:#111;font-size:11px;letter-spacing:-0.745px;">PUNTO_ORDEN_1</span>
<svg style="left:926px;top:578px" width="16" height="14" viewBox="0 0 16 14"><rect x="0.500" y="2.500" width="11" height="4" rx=".6" fill="#b9d5f1" stroke="#5f93d1"/><rect x="1.500" y="3.500" width="9" height="1" fill="#e1eefa"/><rect x="3.500" y="8.500" width="11" height="4" rx=".6" fill="#a9cbee" stroke="#5f93d1"/><rect x="4.500" y="9.500" width="9" height="1" fill="#d6e7f8"/></svg>
<span class="t" style="left:946.30px;top:578.09px;line-height:14px;height:14px;color:#111;font-size:11px;letter-spacing:-0.252px;">Lista - </span>
<span class="t" style="left:978.40px;top:578.09px;line-height:14px;height:14px;color:#111;font-size:11px;letter-spacing:-0.601px;">VOTACION_PUNTO_ORDEN_</span>
<svg style="left:908px;top:596px" width="16" height="14" viewBox="0 0 16 14"><rect x="0.500" y="2.500" width="11" height="4" rx=".6" fill="#b9d5f1" stroke="#5f93d1"/><rect x="1.500" y="3.500" width="9" height="1" fill="#e1eefa"/><rect x="3.500" y="8.500" width="11" height="4" rx=".6" fill="#a9cbee" stroke="#5f93d1"/><rect x="4.500" y="9.500" width="9" height="1" fill="#d6e7f8"/></svg>
<span class="t" style="left:928.60px;top:596.09px;line-height:14px;height:14px;color:#111;font-size:11px;letter-spacing:-0.252px;">Lista - </span>
<span class="t" style="left:960.70px;top:596.09px;line-height:14px;height:14px;color:#111;font-size:11px;letter-spacing:-0.868px;">RECIBOS_PENDIENTES</span>
<svg style="left:893px;top:619px" width="9" height="7" viewBox="0 0 9 7"><path d="M1 1.500L4.500 5L8 1.500" fill="none" stroke="#7d8188" stroke-width="1.800"/></svg>
<svg style="left:908px;top:614px" width="16" height="14" viewBox="0 0 16 14"><rect x="0.500" y="2.500" width="11" height="4" rx=".6" fill="#b9d5f1" stroke="#5f93d1"/><rect x="1.500" y="3.500" width="9" height="1" fill="#e1eefa"/><rect x="3.500" y="8.500" width="11" height="4" rx=".6" fill="#a9cbee" stroke="#5f93d1"/><rect x="4.500" y="9.500" width="9" height="1" fill="#d6e7f8"/></svg>
<span class="t" style="left:928.60px;top:614.09px;line-height:14px;height:14px;color:#111;font-size:11px;letter-spacing:-0.252px;">Lista - </span>
<span class="t" style="left:960.70px;top:614.09px;line-height:14px;height:14px;color:#111;font-size:11px;letter-spacing:-0.745px;">PUNTO_ORDEN_2</span>
<svg style="left:926px;top:632px" width="16" height="14" viewBox="0 0 16 14"><rect x="0.500" y="2.500" width="11" height="4" rx=".6" fill="#b9d5f1" stroke="#5f93d1"/><rect x="1.500" y="3.500" width="9" height="1" fill="#e1eefa"/><rect x="3.500" y="8.500" width="11" height="4" rx=".6" fill="#a9cbee" stroke="#5f93d1"/><rect x="4.500" y="9.500" width="9" height="1" fill="#d6e7f8"/></svg>
<span class="t" style="left:946.30px;top:632.09px;line-height:14px;height:14px;color:#111;font-size:11px;letter-spacing:-0.252px;">Lista - </span>
<span class="t" style="left:978.40px;top:632.09px;line-height:14px;height:14px;color:#111;font-size:11px;letter-spacing:-0.601px;">VOTACION_PUNTO_ORDEN_</span>
<svg style="left:893px;top:655px" width="9" height="7" viewBox="0 0 9 7"><path d="M1 1.500L4.500 5L8 1.500" fill="none" stroke="#7d8188" stroke-width="1.800"/></svg>
<svg style="left:908px;top:650px" width="16" height="14" viewBox="0 0 16 14"><rect x="0.500" y="2.500" width="11" height="4" rx=".6" fill="#b9d5f1" stroke="#5f93d1"/><rect x="1.500" y="3.500" width="9" height="1" fill="#e1eefa"/><rect x="3.500" y="8.500" width="11" height="4" rx=".6" fill="#a9cbee" stroke="#5f93d1"/><rect x="4.500" y="9.500" width="9" height="1" fill="#d6e7f8"/></svg>
<span class="t" style="left:928.60px;top:650.09px;line-height:14px;height:14px;color:#111;font-size:11px;letter-spacing:-0.252px;">Lista - </span>
<span class="t" style="left:960.70px;top:650.09px;line-height:14px;height:14px;color:#111;font-size:11px;letter-spacing:-0.745px;">PUNTO_ORDEN_3</span>
<svg style="left:926px;top:668px" width="16" height="14" viewBox="0 0 16 14"><rect x="0.500" y="2.500" width="11" height="4" rx=".6" fill="#b9d5f1" stroke="#5f93d1"/><rect x="1.500" y="3.500" width="9" height="1" fill="#e1eefa"/><rect x="3.500" y="8.500" width="11" height="4" rx=".6" fill="#a9cbee" stroke="#5f93d1"/><rect x="4.500" y="9.500" width="9" height="1" fill="#d6e7f8"/></svg>
<span class="t" style="left:946.30px;top:668.09px;line-height:14px;height:14px;color:#111;font-size:11px;letter-spacing:-0.252px;">Lista - </span>
<span class="t" style="left:978.40px;top:668.09px;line-height:14px;height:14px;color:#111;font-size:11px;letter-spacing:-0.601px;">VOTACION_PUNTO_ORDEN_</span>
<svg style="left:893px;top:691px" width="9" height="7" viewBox="0 0 9 7"><path d="M1 1.500L4.500 5L8 1.500" fill="none" stroke="#7d8188" stroke-width="1.800"/></svg>
<svg style="left:908px;top:686px" width="16" height="14" viewBox="0 0 16 14"><rect x="0.500" y="2.500" width="11" height="4" rx=".6" fill="#b9d5f1" stroke="#5f93d1"/><rect x="1.500" y="3.500" width="9" height="1" fill="#e1eefa"/><rect x="3.500" y="8.500" width="11" height="4" rx=".6" fill="#a9cbee" stroke="#5f93d1"/><rect x="4.500" y="9.500" width="9" height="1" fill="#d6e7f8"/></svg>
<span class="t" style="left:928.60px;top:686.09px;line-height:14px;height:14px;color:#111;font-size:11px;letter-spacing:-0.252px;">Lista - </span>
<span class="t" style="left:960.70px;top:686.09px;line-height:14px;height:14px;color:#111;font-size:11px;letter-spacing:-0.745px;">PUNTO_ORDEN_4</span>
<svg style="left:926px;top:704px" width="16" height="14" viewBox="0 0 16 14"><rect x="0.500" y="2.500" width="11" height="4" rx=".6" fill="#b9d5f1" stroke="#5f93d1"/><rect x="1.500" y="3.500" width="9" height="1" fill="#e1eefa"/><rect x="3.500" y="8.500" width="11" height="4" rx=".6" fill="#a9cbee" stroke="#5f93d1"/><rect x="4.500" y="9.500" width="9" height="1" fill="#d6e7f8"/></svg>
<span class="t" style="left:946.30px;top:704.09px;line-height:14px;height:14px;color:#111;font-size:11px;letter-spacing:-0.252px;">Lista - </span>
<span class="t" style="left:978.40px;top:704.09px;line-height:14px;height:14px;color:#111;font-size:11px;letter-spacing:-0.601px;">VOTACION_PUNTO_ORDEN_</span>
<svg style="left:893px;top:727px" width="9" height="7" viewBox="0 0 9 7"><path d="M1 1.500L4.500 5L8 1.500" fill="none" stroke="#7d8188" stroke-width="1.800"/></svg>
<svg style="left:908px;top:722px" width="16" height="14" viewBox="0 0 16 14"><rect x="0.500" y="2.500" width="11" height="4" rx=".6" fill="#b9d5f1" stroke="#5f93d1"/><rect x="1.500" y="3.500" width="9" height="1" fill="#e1eefa"/><rect x="3.500" y="8.500" width="11" height="4" rx=".6" fill="#a9cbee" stroke="#5f93d1"/><rect x="4.500" y="9.500" width="9" height="1" fill="#d6e7f8"/></svg>
<span class="t" style="left:928.60px;top:722.09px;line-height:14px;height:14px;color:#111;font-size:11px;letter-spacing:-0.252px;">Lista - </span>
<span class="t" style="left:960.70px;top:722.09px;line-height:14px;height:14px;color:#111;font-size:11px;letter-spacing:-0.745px;">PUNTO_ORDEN_5</span>
<svg style="left:926px;top:740px" width="16" height="14" viewBox="0 0 16 14"><rect x="0.500" y="2.500" width="11" height="4" rx=".6" fill="#b9d5f1" stroke="#5f93d1"/><rect x="1.500" y="3.500" width="9" height="1" fill="#e1eefa"/><rect x="3.500" y="8.500" width="11" height="4" rx=".6" fill="#a9cbee" stroke="#5f93d1"/><rect x="4.500" y="9.500" width="9" height="1" fill="#d6e7f8"/></svg>
<span class="t" style="left:946.30px;top:740.09px;line-height:14px;height:14px;color:#111;font-size:11px;letter-spacing:-0.252px;">Lista - </span>
<span class="t" style="left:978.40px;top:740.09px;line-height:14px;height:14px;color:#111;font-size:11px;letter-spacing:-0.601px;">VOTACION_PUNTO_ORDEN_</span>
<svg style="left:893px;top:763px" width="9" height="7" viewBox="0 0 9 7"><path d="M1 1.500L4.500 5L8 1.500" fill="none" stroke="#7d8188" stroke-width="1.800"/></svg>
<svg style="left:908px;top:758px" width="16" height="14" viewBox="0 0 16 14"><rect x="0.500" y="2.500" width="11" height="4" rx=".6" fill="#b9d5f1" stroke="#5f93d1"/><rect x="1.500" y="3.500" width="9" height="1" fill="#e1eefa"/><rect x="3.500" y="8.500" width="11" height="4" rx=".6" fill="#a9cbee" stroke="#5f93d1"/><rect x="4.500" y="9.500" width="9" height="1" fill="#d6e7f8"/></svg>
<span class="t" style="left:928.60px;top:758.09px;line-height:14px;height:14px;color:#111;font-size:11px;letter-spacing:-0.252px;">Lista - </span>
<span class="t" style="left:960.70px;top:758.09px;line-height:14px;height:14px;color:#111;font-size:11px;letter-spacing:-0.745px;">PUNTO_ORDEN_6</span>
<svg style="left:926px;top:776px" width="16" height="14" viewBox="0 0 16 14"><rect x="0.500" y="2.500" width="11" height="4" rx=".6" fill="#b9d5f1" stroke="#5f93d1"/><rect x="1.500" y="3.500" width="9" height="1" fill="#e1eefa"/><rect x="3.500" y="8.500" width="11" height="4" rx=".6" fill="#a9cbee" stroke="#5f93d1"/><rect x="4.500" y="9.500" width="9" height="1" fill="#d6e7f8"/></svg>
<span class="t" style="left:946.30px;top:776.09px;line-height:14px;height:14px;color:#111;font-size:11px;letter-spacing:-0.252px;">Lista - </span>
<span class="t" style="left:978.40px;top:776.09px;line-height:14px;height:14px;color:#111;font-size:11px;letter-spacing:-0.601px;">VOTACION_PUNTO_ORDEN_</span>
<div style="left:7px;top:883px;width:1193px;height:26px;box-sizing:border-box;border:1px solid #878b92;background:linear-gradient(to bottom,#e8eaed 0,#dcdfe3 45%,#c4c7cc 100%)"></div>
<svg style="left:1186px;top:894px" width="10" height="10" viewBox="0 0 10 10"><rect x="8" y="0" width="2" height="2" fill="#8e9299"/><rect x="4" y="4" width="2" height="2" fill="#8e9299"/><rect x="8" y="4" width="2" height="2" fill="#8e9299"/><rect x="0" y="8" width="2" height="2" fill="#8e9299"/><rect x="4" y="8" width="2" height="2" fill="#8e9299"/><rect x="8" y="8" width="2" height="2" fill="#8e9299"/></svg>
<div id="frame"></div>
</div>
</body></html>
